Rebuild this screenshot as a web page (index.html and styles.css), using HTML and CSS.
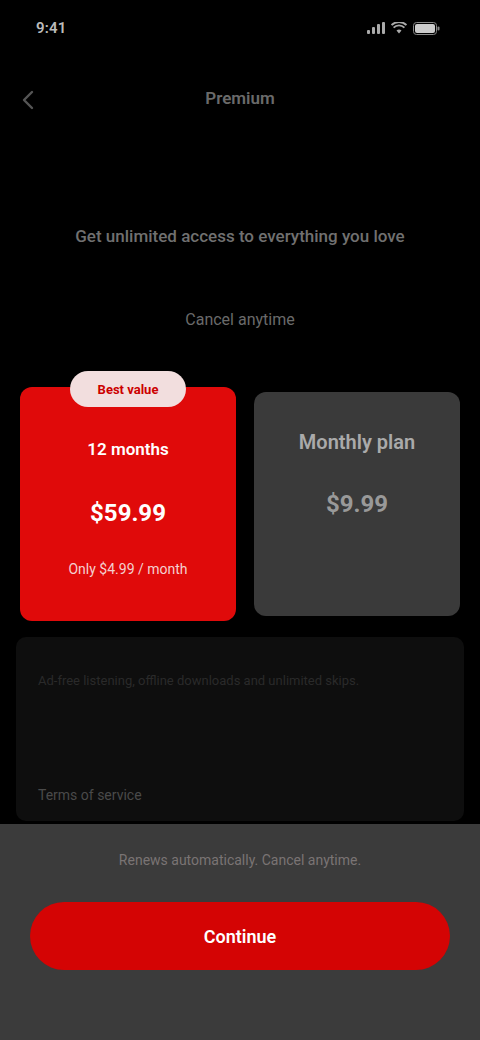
FILE: index.html
```html
<!DOCTYPE html>
<html lang="en">
<head>
<meta charset="utf-8">
<title>Choose your plan</title>
<link rel="stylesheet" href="styles.css">
</head>
<body>
<div class="screen">
  <div class="status">
    <span class="time">9:41</span>
    <span class="status-icons">
      <svg width="18" height="12" viewBox="0 0 18 12"><rect x="0" y="8" width="3" height="4" rx="1" fill="#aaa"/><rect x="5" y="5" width="3" height="7" rx="1" fill="#aaa"/><rect x="10" y="2" width="3" height="10" rx="1" fill="#aaa"/><rect x="15" y="0" width="3" height="12" rx="1" fill="#aaa"/></svg>
      <svg width="16" height="12" viewBox="0 0 16 12"><path d="M8 11.5 L5.5 8.6 A3.6 3.6 0 0 1 10.5 8.6 Z" fill="#aaa"/><path d="M2.6 5.6 A7.6 7.6 0 0 1 13.4 5.6" stroke="#aaa" stroke-width="1.8" fill="none"/><path d="M0.6 3 A10.6 10.6 0 0 1 15.4 3" stroke="#aaa" stroke-width="1.8" fill="none"/></svg>
      <svg width="27" height="13" viewBox="0 0 27 13"><rect x="0.5" y="0.5" width="23" height="12" rx="3" stroke="#888" fill="none"/><rect x="2" y="2" width="20" height="9" rx="2" fill="#ccc"/><rect x="24.5" y="4.5" width="2" height="4" rx="1" fill="#888"/></svg>
    </span>
  </div>

  <header class="topbar">
    <span class="back">
      <svg width="12" height="20" viewBox="0 0 12 20"><path d="M10 2 L2 10 L10 18" stroke="#555" stroke-width="2.4" fill="none" stroke-linecap="round" stroke-linejoin="round"/></svg>
    </span>
    <h1 class="title">Premium</h1>
  </header>

  <section class="intro">
    <p class="headline">Get unlimited access to everything you love</p>
    <p class="sub">Cancel anytime</p>
  </section>

  <section class="plans">
    <div class="plan plan-active">
      <span class="badge">Best value</span>
      <p class="plan-name">12 months</p>
      <p class="plan-price">$59.99</p>
      <p class="plan-note">Only $4.99 / month</p>
    </div>
    <div class="plan plan-muted">
      <p class="plan-name">Monthly plan</p>
      <p class="plan-price">$9.99</p>
    </div>
  </section>

  <section class="details">
    <p class="details-text">Ad‑free listening, offline downloads and unlimited skips.</p>
    <p class="details-link">Terms of service</p>
  </section>

  <footer class="sheet">
    <p class="sheet-text">Renews automatically. Cancel anytime.</p>
    <button class="cta">Continue</button>
  </footer>
</div>
</body>
</html>
```

FILE: styles.css
```css
* { box-sizing: border-box; }
html, body { margin: 0; padding: 0; background: #000; }
body { font-family: Roboto, "Liberation Sans", Arial, sans-serif; color: #fff; }
p, h1 { margin: 0; }

.screen {
  width: 480px;
  height: 1040px;
  display: flex;
  flex-direction: column;
  background: #000;
  overflow: hidden;
}

.status {
  height: 56px;
  display: flex;
  align-items: center;
  justify-content: space-between;
  padding: 0 40px 0 36px;
}
.time { font-size: 15px; font-weight: 600; color: #bbb; letter-spacing: 0.2px; }
.status-icons { display: flex; align-items: center; gap: 6px; }

.topbar {
  height: 88px;
  display: flex;
  align-items: center;
  justify-content: center;
  position: relative;
}
.back { position: absolute; left: 22px; top: 34px; display: flex; }
.title { font-size: 17px; font-weight: 600; color: #6a6a6a; margin-top: -4px; }

.intro {
  display: flex;
  flex-direction: column;
  align-items: center;
  padding: 82px 24px 0;
}
.headline { font-size: 17px; font-weight: 500; color: #707070; text-align: center; }
.sub { font-size: 16px; color: #6a6a6a; margin-top: 64px; }

.plans {
  display: grid;
  grid-template-columns: 216px 206px;
  gap: 18px;
  padding: 0 20px;
  margin-top: 58px;
}
.plan {
  height: 234px;
  border-radius: 12px;
  display: flex;
  flex-direction: column;
  align-items: center;
  position: relative;
}
.plan-active { background: #e00a0a; }
.plan-muted { background: #3a3a3a; margin-top: 5px; height: 224px; }

.badge {
  position: absolute;
  top: -16px;
  left: 50px;
  width: 116px;
  height: 36px;
  border-radius: 18px;
  background: #f2dede;
  color: #c00;
  font-size: 13px;
  font-weight: 700;
  display: flex;
  align-items: center;
  justify-content: center;
}
.plan-name { font-size: 17px; font-weight: 600; margin-top: 52px; }
.plan-active .plan-name { color: #fff; }
.plan-muted .plan-name { color: #aaa; margin-top: 38px; font-size: 20px; }
.plan-price { font-size: 24px; font-weight: 700; margin-top: 40px; }
.plan-muted .plan-price { color: #999; margin-top: 36px; }
.plan-note { font-size: 14px; color: #f4d0d0; margin-top: 34px; }

.details {
  margin: 16px 16px 0;
  height: 184px;
  background: #0e0e0e;
  border-radius: 10px;
  padding: 34px 22px 0;
  display: flex;
  flex-direction: column;
}
.details-text { font-size: 13px; color: #2a2a2a; line-height: 20px; }
.details-link { font-size: 14px; color: #4a4a4a; margin-top: 96px; }

.sheet {
  margin-top: auto;
  height: 216px;
  background: #3b3b3b;
  display: flex;
  flex-direction: column;
  align-items: center;
  padding-top: 28px;
}
.sheet-text { font-size: 14px; color: #7a7474; }
.cta {
  margin-top: 34px;
  width: 420px;
  height: 68px;
  border: none;
  border-radius: 34px;
  background: #d40404;
  color: #fff;
  font-family: Roboto, "Liberation Sans", Arial, sans-serif;
  font-size: 18px;
  font-weight: 600;
}
```
